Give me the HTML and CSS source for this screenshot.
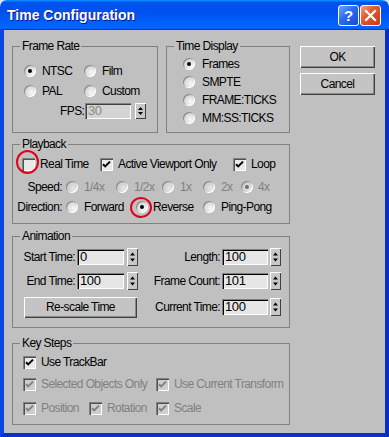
FILE: index.html
```html
<!DOCTYPE html>
<html>
<head>
<meta charset="utf-8">
<title>Time Configuration</title>
<link rel="stylesheet" href="styles.css">
</head>
<body>
<div class="window">
  <div class="titlebar">
    <span class="title">Time Configuration</span>
    <div class="tb-buttons">
      <div class="tb-btn help">?</div>
      <div class="tb-btn close"><svg width="19" height="19" viewBox="0 0 19 19"><path d="M5 5 L14 14 M14 5 L5 14" stroke="#fff" stroke-width="2.2" stroke-linecap="square"/></svg></div>
    </div>
  </div>
  <div class="client">
    <div class="top-row">
      <fieldset class="group fr">
        <legend>Frame Rate</legend>
        <div class="fr-body">
          <div class="fr-grid">
            <div class="opt"><span class="radio on"></span>NTSC</div>
            <div class="opt"><span class="radio"></span>Film</div>
            <div class="opt"><span class="radio"></span>PAL</div>
            <div class="opt"><span class="radio"></span>Custom</div>
          </div>
          <div class="fps-row">
            <span class="fps-lbl">FPS:</span>
            <span class="field dis fps-field">30</span>
            <span class="spin"><svg width="11" height="16" viewBox="0 0 11 16"><polygon points="3,7 8,7 5.5,4" fill="#000"/><polygon points="3,9 8,9 5.5,12" fill="#000"/></svg></span>
          </div>
        </div>
      </fieldset>
      <fieldset class="group td">
        <legend>Time Display</legend>
        <div class="td-body">
          <div class="opt td-row"><span class="radio on"></span>Frames</div>
          <div class="opt td-row"><span class="radio"></span>SMPTE</div>
          <div class="opt td-row"><span class="radio"></span>FRAME:TICKS</div>
          <div class="opt td-row"><span class="radio"></span>MM:SS:TICKS</div>
        </div>
      </fieldset>
      <div class="btn-col">
        <div class="btn dlg-btn">OK</div>
        <div class="btn dlg-btn">Cancel</div>
      </div>
    </div>

    <fieldset class="group pb">
      <legend>Playback</legend>
      <div class="pb-body">
        <div class="pb-row checks">
          <div class="opt cb-opt"><span class="check-wrap"><span class="check"></span><span class="ring ring-rt"></span></span>Real Time</div>
          <div class="opt cb-opt"><span class="check on"><svg width="13" height="13" viewBox="0 0 13 13"><path d="M3 6.2 L5.2 8.4 L10 3.6" stroke="#000" stroke-width="2" fill="none"/></svg></span>Active Viewport Only</div>
          <div class="opt cb-opt"><span class="check on"><svg width="13" height="13" viewBox="0 0 13 13"><path d="M3 6.2 L5.2 8.4 L10 3.6" stroke="#000" stroke-width="2" fill="none"/></svg></span>Loop</div>
        </div>
        <div class="pb-row speed">
          <span class="row-lbl">Speed:</span>
          <div class="opt dis-text"><span class="radio dis"></span>1/4x</div>
          <div class="opt dis-text"><span class="radio dis"></span>1/2x</div>
          <div class="opt dis-text"><span class="radio dis"></span>1x</div>
          <div class="opt dis-text"><span class="radio dis"></span>2x</div>
          <div class="opt dis-text r4"><span class="radio dis on"></span>4x</div>
        </div>
        <div class="pb-row direction">
          <span class="row-lbl">Direction:</span>
          <div class="opt"><span class="radio"></span>Forward</div>
          <div class="opt rev"><span class="radio-wrap"><span class="radio on"></span><span class="ring ring-rev"></span></span>Reverse</div>
          <div class="opt"><span class="radio"></span>Ping-Pong</div>
        </div>
      </div>
    </fieldset>

    <fieldset class="group an">
      <legend>Animation</legend>
      <div class="an-body">
        <div class="an-row">
          <span class="lbl-l">Start Time:</span>
          <span class="field fl">0</span>
          <span class="spin sl"><svg width="11" height="18" viewBox="0 0 11 18"><polygon points="3,7.5 8,7.5 5.5,4.5" fill="#000"/><polygon points="3,10.5 8,10.5 5.5,13.5" fill="#000"/></svg></span>
          <span class="lbl-r">Length:</span>
          <span class="field fr-f">100</span>
          <span class="spin sr"><svg width="11" height="18" viewBox="0 0 11 18"><polygon points="3,7.5 8,7.5 5.5,4.5" fill="#000"/><polygon points="3,10.5 8,10.5 5.5,13.5" fill="#000"/></svg></span>
        </div>
        <div class="an-row">
          <span class="lbl-l">End Time:</span>
          <span class="field fl">100</span>
          <span class="spin sl"><svg width="11" height="18" viewBox="0 0 11 18"><polygon points="3,7.5 8,7.5 5.5,4.5" fill="#000"/><polygon points="3,10.5 8,10.5 5.5,13.5" fill="#000"/></svg></span>
          <span class="lbl-r">Frame Count:</span>
          <span class="field fr-f">101</span>
          <span class="spin sr"><svg width="11" height="18" viewBox="0 0 11 18"><polygon points="3,7.5 8,7.5 5.5,4.5" fill="#000"/><polygon points="3,10.5 8,10.5 5.5,13.5" fill="#000"/></svg></span>
        </div>
        <div class="an-row last">
          <div class="btn rescale">Re-scale Time</div>
          <span class="lbl-r wide">Current Time:</span>
          <span class="field fr-f">100</span>
          <span class="spin sr"><svg width="11" height="18" viewBox="0 0 11 18"><polygon points="3,7.5 8,7.5 5.5,4.5" fill="#000"/><polygon points="3,10.5 8,10.5 5.5,13.5" fill="#000"/></svg></span>
        </div>
      </div>
    </fieldset>

    <fieldset class="group ks">
      <legend>Key Steps</legend>
      <div class="ks-body">
        <div class="ks-row">
          <div class="opt cb-opt"><span class="check on"><svg width="13" height="13" viewBox="0 0 13 13"><path d="M3 6.2 L5.2 8.4 L10 3.6" stroke="#000" stroke-width="2" fill="none"/></svg></span>Use TrackBar</div>
        </div>
        <div class="ks-row two">
          <div class="opt cb-opt dis-text"><span class="check dis"><svg width="13" height="13" viewBox="0 0 13 13"><path d="M3 6.2 L5.2 8.4 L10 3.6" stroke="#808080" stroke-width="2" fill="none"/></svg></span>Selected Objects Only</div>
          <div class="opt cb-opt dis-text"><span class="check dis"><svg width="13" height="13" viewBox="0 0 13 13"><path d="M3 6.2 L5.2 8.4 L10 3.6" stroke="#808080" stroke-width="2" fill="none"/></svg></span>Use Current Transform</div>
        </div>
        <div class="ks-row three">
          <div class="opt cb-opt dis-text"><span class="check dis"><svg width="13" height="13" viewBox="0 0 13 13"><path d="M3 6.2 L5.2 8.4 L10 3.6" stroke="#808080" stroke-width="2" fill="none"/></svg></span>Position</div>
          <div class="opt cb-opt dis-text"><span class="check dis"><svg width="13" height="13" viewBox="0 0 13 13"><path d="M3 6.2 L5.2 8.4 L10 3.6" stroke="#808080" stroke-width="2" fill="none"/></svg></span>Rotation</div>
          <div class="opt cb-opt dis-text"><span class="check dis"><svg width="13" height="13" viewBox="0 0 13 13"><path d="M3 6.2 L5.2 8.4 L10 3.6" stroke="#808080" stroke-width="2" fill="none"/></svg></span>Scale</div>
        </div>
      </div>
    </fieldset>
  </div>
</div>
</body>
</html>
```

FILE: styles.css
```css
html, body {
  margin: 0;
  padding: 0;
}
body {
  background: #d9e2f0;
  font-family: "Liberation Sans", Arial, sans-serif;
  font-size: 12px;
  letter-spacing: -0.6px;
  color: #000;
}
.window {
  width: 389px;
  height: 437px;
  display: flex;
  flex-direction: column;
}
.titlebar {
  height: 30px;
  flex: none;
  box-sizing: border-box;
  border-radius: 7px 7px 0 0;
  background: linear-gradient(180deg, #0997ff, #0053ee 8%, #0050ee 40%, #0066ff 88%, #0066ff 93%, #005bff 95%, #003dd7 96%, #003dd7);
  display: flex;
  align-items: center;
  padding: 0 8px 0 7px;
}
.title {
  flex: 1;
  color: #fff;
  font-weight: bold;
  font-size: 14px;
  letter-spacing: 0;
  text-shadow: 1px 1px #0f1089;
}
.tb-buttons {
  display: flex;
  gap: 1px;
}
.tb-btn {
  width: 21px;
  height: 21px;
  box-sizing: border-box;
  border: 1px solid #fff;
  border-radius: 3px;
  display: flex;
  align-items: center;
  justify-content: center;
}
.help {
  background: linear-gradient(135deg, #6aa8ff, #2a6af0 45%, #1848d8);
  color: #fff;
  font-weight: bold;
  font-size: 15px;
  letter-spacing: 0;
}
.close {
  background: linear-gradient(135deg, #f3a184, #e2582f 40%, #c93c17);
}
.client {
  flex: 1;
  box-sizing: border-box;
  background: #c0c0c0;
  border-left: 4px solid #0a47e0;
  border-right: 4px solid #0a2fc0;
  border-bottom: 4px solid #0a30c8;
  padding: 9px 0 0 8px;
}
.top-row {
  display: flex;
  align-items: flex-start;
}
.group {
  margin: 0;
  padding: 0;
  border: 1px solid #808080;
  min-width: 0;
  box-sizing: border-box;
}
.group legend {
  margin-left: 7px;
  padding: 0 2px;
  line-height: 14px;
}
.opt {
  display: flex;
  align-items: center;
  gap: 6px;
  white-space: nowrap;
}
.radio {
  display: block;
  flex: none;
  position: relative;
  width: 12px;
  height: 12px;
  border-radius: 50%;
  background: radial-gradient(circle at 62% 62%, #f8f8f8, #d6d6d6 60%, #b8b8b8);
  box-shadow: inset 1px 1px 0 #8a8a8a, inset -1px -1px 0 #ffffff;
}
.radio.on::after {
  content: "";
  position: absolute;
  left: 4px;
  top: 4px;
  width: 4px;
  height: 4px;
  border-radius: 50%;
  background: #000;
}
.radio.dis {
  background: radial-gradient(circle at 62% 62%, #e6e6e6, #cccccc 60%, #b4b4b4);
}
.radio.dis.on::after {
  background: #6e6e6e;
}
.dis-text {
  color: #808080;
}
.check {
  flex: none;
  width: 13px;
  height: 13px;
  box-sizing: border-box;
  background: #e9e9e9;
  box-shadow: inset 1px 1px 0 #808080, inset 2px 2px 0 #505050, inset -1px -1px 0 #ffffff;
  display: block;
}
.check svg {
  display: block;
}
.check.dis {
  background: #cdcdcd;
}
.check-wrap, .radio-wrap {
  position: relative;
  flex: none;
  display: block;
}
.ring {
  position: absolute;
  box-sizing: border-box;
  border: 2px solid #e3001b;
  border-radius: 50%;
}
.ring-rt {
  left: -6px;
  top: -8px;
  width: 23px;
  height: 24px;
}
.ring-rev {
  left: -6px;
  top: -4px;
  width: 22px;
  height: 21px;
}
.field {
  display: block;
  box-sizing: border-box;
  height: 16px;
  line-height: 16px;
  padding-left: 3px;
  background: #e6e6e6;
  box-shadow: inset 1px 1px 0 #808080, inset 2px 2px 0 #000, inset -1px -1px 0 #ffffff;
  font-size: 13px;
  letter-spacing: -0.4px;
}
.field.dis {
  color: #8a8a8a;
  background: #d4d4d4;
  box-shadow: inset 1px 1px 0 #808080, inset 2px 2px 0 #404040, inset -1px -1px 0 #ffffff;
}
.spin {
  display: block;
  flex: none;
  width: 11px;
  background: #c8c8c8;
  box-shadow: inset 1px 1px 0 #ffffff, inset -1px -1px 0 #404040;
}
.spin svg {
  display: block;
}
.btn {
  box-sizing: border-box;
  background: #c4c4c4;
  box-shadow: inset 1px 1px 0 #ffffff, inset -1px -1px 0 #404040, inset -2px -2px 0 #8a8a8a;
  display: flex;
  align-items: center;
  justify-content: center;
}

/* Frame rate */
.fr {
  width: 146px;
  height: 94px;
}
.fr-body {
  padding: 8px 0 0 11px;
}
.fr-grid {
  display: grid;
  grid-template-columns: 60px auto;
  grid-auto-rows: 20px;
  align-items: center;
}
.fps-row {
  display: flex;
  align-items: center;
  padding-left: 36px;
  margin-top: 2px;
}
.fps-lbl {
  width: 23px;
}
.fps-field {
  width: 46px;
  margin-left: 2px;
}
.fps-row .spin {
  margin-left: 4px;
  height: 16px;
}

/* Time display */
.td {
  width: 124px;
  height: 94px;
  margin-left: 8px;
}
.td-body {
  padding: 2px 0 0 16px;
}
.td-row {
  height: 18px;
  gap: 7px;
}

/* Buttons */
.btn-col {
  margin: 7px 0 0 10px;
  display: flex;
  flex-direction: column;
  gap: 5px;
}
.dlg-btn {
  width: 75px;
  height: 22px;
}

/* Playback */
.pb {
  width: 278px;
  height: 87px;
  margin-top: 4px;
}
.pb-body {
  padding-top: 3px;
}
.pb-row {
  display: grid;
  height: 20px;
  align-items: center;
}
.checks {
  grid-template-columns: 78px 133px auto;
  padding-left: 9px;
  margin-bottom: 3px;
}
.cb-opt {
  gap: 5px;
}
.row-lbl {
  text-align: right;
  padding-right: 4px;
}
.speed {
  grid-template-columns: 53px 50px 46px 41px 38px auto;
}
.speed .r4 {
  gap: 5px;
}
.direction {
  grid-template-columns: 53px 70px 67px auto;
}
.direction .rev {
  gap: 5px;
}

/* Animation */
.an {
  width: 278px;
  height: 99px;
  margin-top: 5px;
}
.an-body {
  padding-top: 2px;
}
.an-row {
  display: flex;
  align-items: center;
  height: 24px;
}
.an-row.last {
  margin-top: 2px;
}
.lbl-l {
  width: 62px;
  text-align: right;
}
.fl {
  width: 47px;
  margin-left: 2px;
}
.sl {
  margin-left: 3px;
  height: 18px;
}
.lbl-r {
  width: 82px;
  text-align: right;
}
.lbl-r.wide {
  width: 83px;
}
.fr-f {
  width: 46px;
  margin-left: 2px;
}
.sr {
  margin-left: 2px;
  height: 18px;
}
.rescale {
  width: 113px;
  height: 21px;
  margin-left: 11px;
}

/* Key steps */
.ks {
  width: 278px;
  height: 89px;
  margin-top: 8px;
}
.ks-body {
  padding: 1px 0 0 10px;
}
.ks-row {
  display: grid;
  height: 22px;
  align-items: center;
}
.ks-row.two {
  grid-template-columns: 133px auto;
}
.ks-row.three {
  grid-template-columns: 66px 67px auto;
  margin-top: 2px;
}
```
